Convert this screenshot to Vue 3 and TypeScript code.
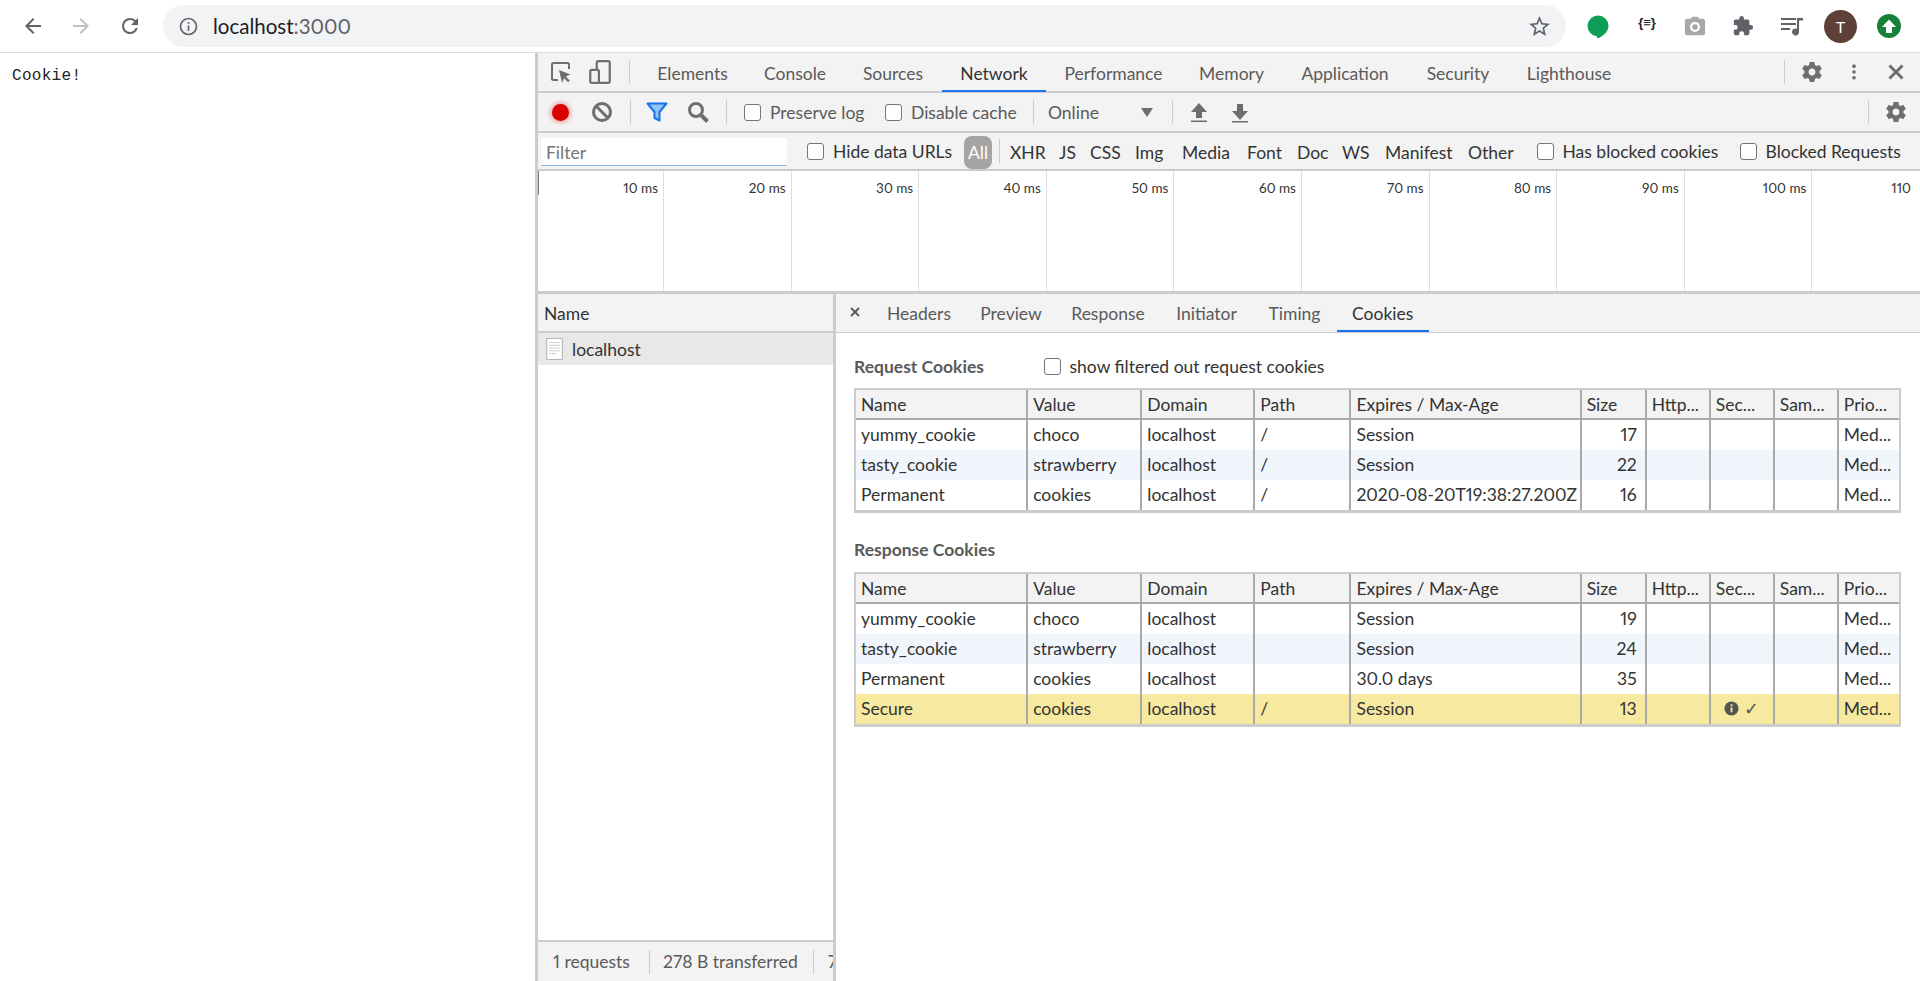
<script setup lang="ts">
const mainTabs = [
  { name: 'Elements', w: 107 }, { name: 'Console', w: 98 }, { name: 'Sources', w: 98 }, { name: 'Network', w: 104 },
  { name: 'Performance', w: 135 }, { name: 'Memory', w: 101 }, { name: 'Application', w: 126 }, { name: 'Security', w: 100 }, { name: 'Lighthouse', w: 122 },
]
const filters = [
  { name: 'XHR', w: 49 }, { name: 'JS', w: 31 }, { name: 'CSS', w: 45 }, { name: 'Img', w: 47 }, { name: 'Media', w: 65 },
  { name: 'Font', w: 50 }, { name: 'Doc', w: 45 }, { name: 'WS', w: 43 }, { name: 'Manifest', w: 83 }, { name: 'Other', w: 68.5 },
]
const ticks = ['10 ms', '20 ms', '30 ms', '40 ms', '50 ms', '60 ms', '70 ms', '80 ms', '90 ms', '100 ms', '110']
const detailTabs = [
  { name: 'Headers', w: 95 }, { name: 'Preview', w: 89 }, { name: 'Response', w: 105 },
  { name: 'Initiator', w: 92 }, { name: 'Timing', w: 84 }, { name: 'Cookies', w: 92.5 },
]
const columns = ['Name', 'Value', 'Domain', 'Path', 'Expires / Max-Age', 'Size', 'Http...', 'Sec...', 'Sam...', 'Prio...']
const colWidths = [170, 114, 113, 96, 230, 65, 64, 64, 64, 62]

interface Cookie { name: string; value: string; path: string; expires: string; size: number; secure?: boolean }

const requestCookies: Cookie[] = [
  { name: 'yummy_cookie', value: 'choco', path: '/', expires: 'Session', size: 17 },
  { name: 'tasty_cookie', value: 'strawberry', path: '/', expires: 'Session', size: 22 },
  { name: 'Permanent', value: 'cookies', path: '/', expires: '2020-08-20T19:38:27.200Z', size: 16 },
]
const responseCookies: Cookie[] = [
  { name: 'yummy_cookie', value: 'choco', path: '', expires: 'Session', size: 19 },
  { name: 'tasty_cookie', value: 'strawberry', path: '', expires: 'Session', size: 24 },
  { name: 'Permanent', value: 'cookies', path: '', expires: '30.0 days', size: 35 },
  { name: 'Secure', value: 'cookies', path: '/', expires: 'Session', size: 13, secure: true },
]
const sections = [
  { title: 'Request Cookies', rows: requestCookies, toggle: true },
  { title: 'Response Cookies', rows: responseCookies, toggle: false },
]
const gear = 'M19.43 12.98c.04-.32.07-.64.07-.98s-.03-.66-.07-.98l2.11-1.65c.19-.15.24-.42.12-.64l-2-3.46c-.12-.22-.39-.3-.61-.22l-2.49 1c-.52-.4-1.08-.73-1.69-.98l-.38-2.65C14.46 2.18 14.25 2 14 2h-4c-.25 0-.46.18-.49.42l-.38 2.65c-.61.25-1.17.59-1.69.98l-2.49-1c-.23-.09-.49 0-.61.22l-2 3.46c-.13.22-.07.49.12.64l2.11 1.65c-.04.32-.07.65-.07.98s.03.66.07.98l-2.11 1.65c-.19.15-.24.42-.12.64l2 3.46c.12.22.39.3.61.22l2.49-1c.52.4 1.08.73 1.69.98l.38 2.65c.03.24.24.42.49.42h4c.25 0 .46-.18.49-.42l.38-2.65c.61-.25 1.17-.59 1.69-.98l2.49 1c.23.09.49 0 .61-.22l2-3.46c.12-.22.07-.49-.12-.64l-2.11-1.65zM12 15.5c-1.93 0-3.5-1.57-3.5-3.5s1.57-3.5 3.5-3.5 3.5 1.57 3.5 3.5-1.57 3.5-3.5 3.5z'
</script>

<template>
  <div class="screen">
    <header class="browser">
      <svg class="nav back" viewBox="0 0 24 24"><path d="M20 11H7.8l5.6-5.6L12 4l-8 8 8 8 1.4-1.4L7.8 13H20z" /></svg>
      <svg class="nav forward" viewBox="0 0 24 24"><path d="M4 11h12.2l-5.6-5.6L12 4l8 8-8 8-1.4-1.4 5.6-5.6H4z" /></svg>
      <svg class="nav reload" viewBox="0 0 24 24"><path d="M17.65 6.35A7.95 7.95 0 0 0 12 4a8 8 0 1 0 7.73 10h-2.08A6 6 0 1 1 12 6c1.66 0 3.14.69 4.22 1.78L13 11h7V4z" /></svg>
      <div class="omnibox">
        <svg class="info" viewBox="0 0 20 20"><circle cx="10" cy="10" r="7.6" /><path d="M10 9v5.2M10 5.6v1.8" /></svg>
        <span class="url">localhost<span class="port">:3000</span></span>
        <svg class="star" viewBox="0 0 24 24"><path d="M22 9.24l-7.19-.62L12 2 9.19 8.63 2 9.24l5.46 4.73L5.82 21 12 17.27 18.18 21l-1.63-7.03L22 9.24zM12 15.4l-3.76 2.27 1-4.28-3.32-2.88 4.38-.38L12 6.1l1.71 4.04 4.38.38-3.32 2.88 1 4.28L12 15.4z" /></svg>
      </div>
      <div class="extensions">
        <svg class="ext e-hangouts" viewBox="0 0 24 24"><path fill="#0f9d58" d="M12 1.500a10.500 10.500 0 0 0-1 20.950V25c3.600-1.600 11.500-6 11.500-13A10.500 10.500 0 0 0 12 1.500z" /></svg>
        <span class="ext json">{≡}</span>
        <svg class="ext e-cam" viewBox="0 0 24 24"><path fill="#a8a8a8" d="M9 2 7.200 4H3.500C2.100 4 1 5.100 1 6.500v13C1 20.900 2.100 22 3.500 22h17c1.400 0 2.500-1.100 2.500-2.500v-13C23 5.100 21.900 4 20.500 4h-3.700L15 2H9zm3 5.500a5.500 5.500 0 1 1 0 11 5.500 5.500 0 0 1 0-11zm0 2.500a3 3 0 1 0 0 6 3 3 0 0 0 0-6z" /></svg>
        <svg class="ext e-puzzle" viewBox="0 0 24 24"><path fill="#5f6368" d="M20.500 11H19V7c0-1.100-.9-2-2-2h-4V3.500a2.500 2.500 0 0 0-5 0V5H4c-1.100 0-2 .9-2 2v3.800h1.500a2.700 2.700 0 0 1 0 5.400H2V20c0 1.100.9 2 2 2h3.800v-1.500a2.700 2.700 0 0 1 5.400 0V22H17c1.100 0 2-.9 2-2v-4h1.500a2.500 2.500 0 0 0 0-5z" /></svg>
        <svg class="ext e-music" viewBox="0 0 24 24"><path fill="#5f6368" d="M1 4h15v2H1zM1 9h15v2H1zM1 14h9v2H1zM17 4h6v2.500h-4V18a3.500 3.500 0 1 1-2-3.160V4z" /></svg>
        <span class="avatar">T</span>
        <span class="update"><svg viewBox="0 0 24 24"><path fill="#fff" d="M12 5.500 19 13h-4v6H9v-6H5z" /></svg></span>
      </div>
    </header>

    <main class="main">
      <section class="page">Cookie!</section>
      <section class="devtools">
        <div class="bar tabs-bar">
          <svg class="icon inspect" viewBox="0 0 24 24"><path class="line" d="M9 20H4.500A1.500 1.500 0 0 1 3 18.500v-14A1.500 1.500 0 0 1 4.500 3h14A1.500 1.500 0 0 1 20 4.500V9" /><path class="solid" d="m10 10 11.500 4.500-4.700 2 4 4-1.700 1.700-4-4-2 4.800z" /></svg>
          <svg class="icon device" viewBox="0 0 24 24"><path class="line" d="M9 10V3.500A1.500 1.500 0 0 1 10.500 2h9A1.500 1.500 0 0 1 21 3.500v17a1.500 1.500 0 0 1-1.500 1.500H11" /><rect class="line" x="3" y="10" width="8" height="12" rx="1.500" /></svg>
          <i class="sep first-sep"></i>
          <nav class="main-tabs">
            <span v-for="tab in mainTabs" :key="tab.name" class="main-tab" :class="{ active: tab.name === 'Network' }" :style="{ width: tab.w + 'px' }">{{ tab.name }}</span>
          </nav>
          <i class="sep push"></i>
          <svg class="icon top-gear" viewBox="0 0 24 24"><path class="solid" :d="gear" /></svg>
          <svg class="icon dots" viewBox="0 0 24 24"><circle class="solid" cx="12" cy="5" r="2.200" /><circle class="solid" cx="12" cy="12" r="2.200" /><circle class="solid" cx="12" cy="19" r="2.200" /></svg>
          <svg class="icon close" viewBox="0 0 24 24"><path class="line thick" d="M5.500 5.500l13 13M18.500 5.500l-13 13" /></svg>
        </div>

        <div class="bar net-bar">
          <span class="record"></span>
          <svg class="icon clear" viewBox="0 0 24 24"><circle class="line thick" cx="12" cy="12" r="8.500" /><path class="line thick" d="M6 6l12 12" /></svg>
          <i class="sep s1"></i>
          <svg class="icon funnel" viewBox="0 0 24 24"><path fill="#90c2f5" stroke="#1a73e8" stroke-width="2" stroke-linejoin="round" d="M2.500 3.500h19L14.500 12v8.500l-5-2.500v-6z" /></svg>
          <svg class="icon search" viewBox="0 0 24 24"><circle class="line thick" cx="10" cy="10" r="6.500" /><path class="line thicker" d="m15 15 6.500 6.500" /></svg>
          <i class="sep s2"></i>
          <span class="check c1"></span><span class="label w-preserve">Preserve log</span>
          <span class="check"></span><span class="label w-disable">Disable cache</span>
          <i class="sep"></i>
          <span class="label online">Online</span>
          <i class="triangle"></i>
          <i class="sep s4"></i>
          <svg class="icon up" viewBox="0 0 24 24"><path class="solid" d="M12 3 4 12h5v6h6v-6h5zM4 20.500h16V22H4z" /></svg>
          <svg class="icon down" viewBox="0 0 24 24"><path class="solid" d="M12 20 4 11h5V4h6v7h5zM4 21h16v1.500H4z" /></svg>
          <i class="sep push"></i>
          <svg class="icon bottom-gear" viewBox="0 0 24 24"><path class="solid" :d="gear" /></svg>
        </div>

        <div class="bar filter-bar">
          <div class="filter-input">Filter</div>
          <span class="check c3"></span><span class="label dark w-hide">Hide data URLs</span>
          <span class="all">All</span>
          <i class="sep s5"></i>
          <span v-for="f in filters" :key="f.name" class="filter-type" :style="{ width: f.w + 'px' }">{{ f.name }}</span>
          <span class="check"></span><span class="label dark w-blocked">Has blocked cookies</span>
          <span class="check"></span><span class="label dark">Blocked Requests</span>
        </div>

        <div class="timeline">
          <div v-for="t in ticks" :key="t" class="tick">{{ t }}</div>
        </div>

        <div class="split">
          <aside class="requests">
            <div class="req-head">Name</div>
            <div class="req-row">
              <svg class="doc" viewBox="0 0 18 24"><path fill="#fff" stroke="#aaa" d="M.5.500h17v23H.5z" /><path stroke="#ccc" d="M3 5h12M3 8h12M3 11h12M3 14h12M3 17h8" /></svg>
              localhost
            </div>
            <div class="req-list"></div>
            <div class="summary">
              <span class="sum first">1 requests</span>
              <span class="sum second">278 B transferred</span>
              <span class="sum last">7</span>
            </div>
          </aside>

          <div class="detail">
            <div class="detail-tabs">
              <svg class="detail-x" viewBox="0 0 12 12"><path d="M2 2l8 8M10 2l-8 8" /></svg>
              <span v-for="tab in detailTabs" :key="tab.name" class="detail-tab" :class="{ active: tab.name === 'Cookies' }" :style="{ width: tab.w + 'px' }">{{ tab.name }}</span>
            </div>
            <div class="cookies">
              <template v-for="section in sections" :key="section.title">
                <div class="section-head" :class="{ second: !section.toggle }">
                  <strong>{{ section.title }}</strong>
                  <template v-if="section.toggle">
                    <span class="check"></span><span class="label dark">show filtered out request cookies</span>
                  </template>
                </div>
                <table class="grid">
                  <colgroup><col v-for="(w, i) in colWidths" :key="i" :style="{ width: w + 'px' }" /></colgroup>
                  <thead>
                    <tr><th v-for="c in columns" :key="c">{{ c }}</th></tr>
                  </thead>
                  <tbody>
                    <tr v-for="row in section.rows" :key="row.name" :class="{ flagged: row.secure }">
                      <td>{{ row.name }}</td>
                      <td>{{ row.value }}</td>
                      <td>localhost</td>
                      <td>{{ row.path }}</td>
                      <td>{{ row.expires }}</td>
                      <td class="num">{{ row.size }}</td>
                      <td></td>
                      <td class="sec">
                        <template v-if="row.secure">
                          <svg class="sec-info" viewBox="0 0 16 16"><circle cx="8" cy="8" r="7.500" fill="#555" /><path d="M8 7v5M8 3.500v2" stroke="#f7e99f" stroke-width="2" /></svg>
                          <span class="tick-mark">✓</span>
                        </template>
                      </td>
                      <td></td>
                      <td>Med...</td>
                    </tr>
                  </tbody>
                </table>
              </template>
            </div>
          </div>
        </div>
      </section>
    </main>
  </div>
</template>

<style>
html, body { margin: 0; height: 100%; overflow: hidden; background: #fff; }
</style>

<style scoped>
.screen {
  width: 1920px;
  height: 981px;
  overflow: hidden;
  display: flex;
  flex-direction: column;
  font-family: "Lato", "Open Sans", sans-serif;
  font-size: 17.5px;
  font-feature-settings: "pnum";
  color: #333;
}
.browser {
  height: 52px;
  flex: none;
  display: flex;
  align-items: center;
  border-bottom: 1px solid #dadce0;
}
.nav { width: 24px; height: 24px; fill: #5f6368; flex: none; }
.back { margin-left: 21px; }
.forward { margin-left: 24px; fill: #bdc1c6; }
.reload { margin-left: 25px; }
.omnibox {
  margin-left: 21px;
  width: 1403px;
  height: 42px;
  border-radius: 21px;
  background: #f1f3f4;
  display: flex;
  align-items: center;
  flex: none;
}
.info { width: 21px; height: 21px; margin-left: 15px; fill: none; stroke: #5f6368; stroke-width: 1.600; }
.url { margin-left: 14px; font-size: 20.5px; color: #202124; }
.port { color: #5f6368; }
.star { width: 25px; height: 25px; margin-left: auto; margin-right: 14px; fill: #5f6368; }
.extensions { display: flex; align-items: center; flex: 1; height: 52px; }
.ext { width: 22px; height: 22px; flex: none; }
.e-hangouts { margin-left: 20px; width: 24px; height: 24px; }
.json { margin-left: 26px; font: bold 13px "Liberation Sans", sans-serif; color: #222; text-align: center; }
.e-cam { margin-left: 26px; }
.e-puzzle { margin-left: 26px; }
.e-music { margin-left: 26px; width: 24px; height: 24px; }
.avatar {
  width: 33px; height: 33px; border-radius: 50%; background: #5d4037; color: #fff;
  margin-left: 20px; flex: none; display: flex; align-items: center; justify-content: center; font-size: 16px;
}
.update {
  width: 24px; height: 24px; border-radius: 50%; background: #188038; margin-left: 20px; flex: none; display: flex;
}
.update svg { width: 24px; height: 24px; }

.main { flex: 1; display: flex; min-height: 0; }
.page {
  width: 535px; flex: none; padding: 11px 0 0 12px; box-sizing: border-box;
  font: 16px/24px "Liberation Mono", monospace; color: #222; letter-spacing: 0.300px;
}
.devtools { flex: 1; min-width: 0; border-left: 3px solid #ccc; display: flex; flex-direction: column; }
.bar {
  flex: none; display: flex; align-items: center; background: #f3f3f3; border-bottom: 2px solid #ccc;
}
.tabs-bar { height: 38px; }
.net-bar { height: 38px; }
.filter-bar { height: 36px; }
.icon { width: 24px; height: 24px; flex: none; }
.line { fill: none; stroke: #6e6e6e; stroke-width: 2; }
.line.thick { stroke-width: 3; }
.line.thicker { stroke-width: 4; }
.solid { fill: #6e6e6e; }
.sep { width: 1px; height: 24px; background: #ccc; flex: none; display: block; }
.push { margin-left: auto; }
.inspect { margin-left: 11px; }
.device { margin-left: 14px; height: 26px; width: 26px; }
.first-sep { margin-left: 16px; }
.main-tabs { display: flex; height: 100%; margin-left: 9px; }
.main-tab {
  display: flex; align-items: center; justify-content: center; color: #5a5a5a; position: relative; height: 38px; flex: none;
  box-sizing: border-box; padding-top: 2px;
}
.main-tab.active { color: #333; }
.main-tab.active::after {
  content: ""; position: absolute; left: 0; right: 0; bottom: -1px; height: 2px; background: #1a73e8;
}
.top-gear { margin-left: 15px; }
.dots { margin-left: 20px; width: 20px; height: 20px; }
.close { margin-left: 20px; margin-right: 12px; }

.record {
  width: 17px; height: 17px; border-radius: 50%; background: #d90000; box-shadow: 0 0 4px 2px rgba(217, 0, 0, .3);
  margin-left: 13.500px; flex: none;
}
.clear { margin-left: 21.500px; }
.s1 { margin-left: 16px; }
.funnel { margin-left: 14px; }
.search { margin-left: 17px; }
.s2 { margin-left: 16px; }
.check {
  width: 17px; height: 17px; box-sizing: border-box; border: 1px solid #767676; border-radius: 3px; background: #fff; flex: none; display: block;
}
.c1 { margin-left: 17px; }
.label { margin-left: 9px; color: #5a5a5a; white-space: nowrap; flex: none; }
.label.dark { color: #333; }
.w-preserve { width: 115px; }
.w-disable { width: 122px; }
.w-hide { width: 131px; }
.w-blocked { width: 177px; }
.online { margin-left: 14px; width: 93px; }
.triangle {
  width: 0; height: 0; border-left: 6px solid transparent; border-right: 6px solid transparent; border-top: 9px solid #6e6e6e; flex: none;
}
.s4 { margin-left: 19px; }
.up { margin-left: 14px; }
.down { margin-left: 17px; }
.bottom-gear { margin-left: 15px; margin-right: 12px; }

.filter-input {
  margin-left: 3px; width: 246px; height: 28px; background: #fff; border-bottom: 1px solid #8ab4e8; box-sizing: border-box;
  padding-left: 5px; color: #757575; line-height: 30px; flex: none; margin-top: 2px;
}
.c3 { margin-left: 20px; }
.all {
  width: 28px; height: 33px; border-radius: 8px; background: #a4a4a4; color: #fff; flex: none;
  display: flex; align-items: center; justify-content: center; margin-top: 2px;
}
.s5 { margin-left: 7px; margin-right: 10px; }
.filter-type { white-space: nowrap; flex: none; padding-top: 3px; }

.timeline {
  flex: none; height: 120px; display: flex; background: #fff; border-bottom: 3px solid #ccc; overflow: hidden; position: relative;
}
.timeline::before {
  content: ""; position: absolute; left: 0; top: 0; width: 1px; height: 24px; background: #777;
}
.tick {
  flex: none; width: 127.600px; box-sizing: border-box; text-align: right; padding: 9px 5px 0 0; font-size: 13.500px;
  border-right: 1px solid #ddd; color: #333; white-space: nowrap;
}
.tick:first-child { width: 126px; }
.tick:last-child { text-align: left; padding-left: 79px; border: 0; }

.split { flex: 1; display: flex; min-height: 0; }
.requests { width: 295px; flex: none; border-right: 3px solid #ccc; display: flex; flex-direction: column; }
.req-head {
  height: 39px; flex: none; box-sizing: border-box; background: #f3f3f3; border-bottom: 2px solid #ccc; padding: 1px 0 0 6px;
  display: flex; align-items: center;
}
.req-row {
  height: 32px; flex: none; background: #e8e8e8; display: flex; align-items: center; padding-left: 8px; color: #333;
}
.doc { width: 17px; height: 22px; margin-right: 9px; flex: none; }
.req-list { flex: 1; }
.summary {
  height: 41px; flex: none; box-sizing: border-box; border-top: 2px solid #ccc; background: #f3f3f3; display: flex; align-items: center;
  color: #5a5a5a; overflow: hidden; white-space: nowrap;
}
.sum { border-right: 1px solid #ccc; line-height: 24px; flex: none; box-sizing: border-box; }
.sum.first { padding-left: 15px; width: 112px; }
.sum.second { padding-left: 13px; width: 164px; }
.sum.last { border: 0; padding-left: 14px; }

.detail { flex: 1; min-width: 0; display: flex; flex-direction: column; }
.detail-tabs {
  height: 39px; flex: none; box-sizing: border-box; background: #f3f3f3; border-bottom: 1px solid #ccc; display: flex; align-items: center; padding-left: 13px;
}
.detail-x { width: 12px; height: 12px; margin-right: 10.500px; margin-top: -3px; fill: none; stroke: #555; stroke-width: 1.800; flex: none; }
.detail-tab { height: 38px; display: flex; align-items: center; justify-content: center; color: #5a5a5a; position: relative; flex: none; }
.detail-tab.active { color: #333; }
.detail-tab.active::after {
  content: ""; position: absolute; left: 0; right: 0; bottom: 0; height: 2px; background: #1a73e8;
}
.cookies { padding: 0 18px; }
.section-head { display: flex; align-items: center; height: 55px; padding-top: 11px; box-sizing: border-box; color: #5a5a5a; }
.section-head.second { height: 59px; padding-top: 13px; }
.section-head strong { font-weight: 700; width: 189.500px; flex: none; }
.grid {
  width: 1047px; table-layout: fixed; border-collapse: separate; border-spacing: 0; border: 2px solid #ccc; border-bottom-width: 3px; box-sizing: border-box;
}
.grid th, .grid td {
  height: 30px; padding: 0 4px 0 5px; box-sizing: border-box; text-align: left; font-weight: 400; border-left: 2px solid #aaa;
  white-space: nowrap; overflow: hidden;
}
.grid td { padding-bottom: 2px; }
.grid th:first-child, .grid td:first-child { border-left: 0; }
.grid th { background: #f3f3f3; border-bottom: 2px solid #aaa; }
.grid tbody tr:nth-child(even) td { background: #f1f6fd; }
.grid tbody tr.flagged td { background: #f7e99f; }
.grid .num { text-align: right; padding-right: 8px; }
.grid .sec { padding-left: 13px; }
.sec-info { width: 15px; height: 15px; vertical-align: -1px; margin-right: 5px; }
.tick-mark { font-family: "DejaVu Sans", sans-serif; font-size: 18px; color: #555; font-weight: 200; }
</style>
